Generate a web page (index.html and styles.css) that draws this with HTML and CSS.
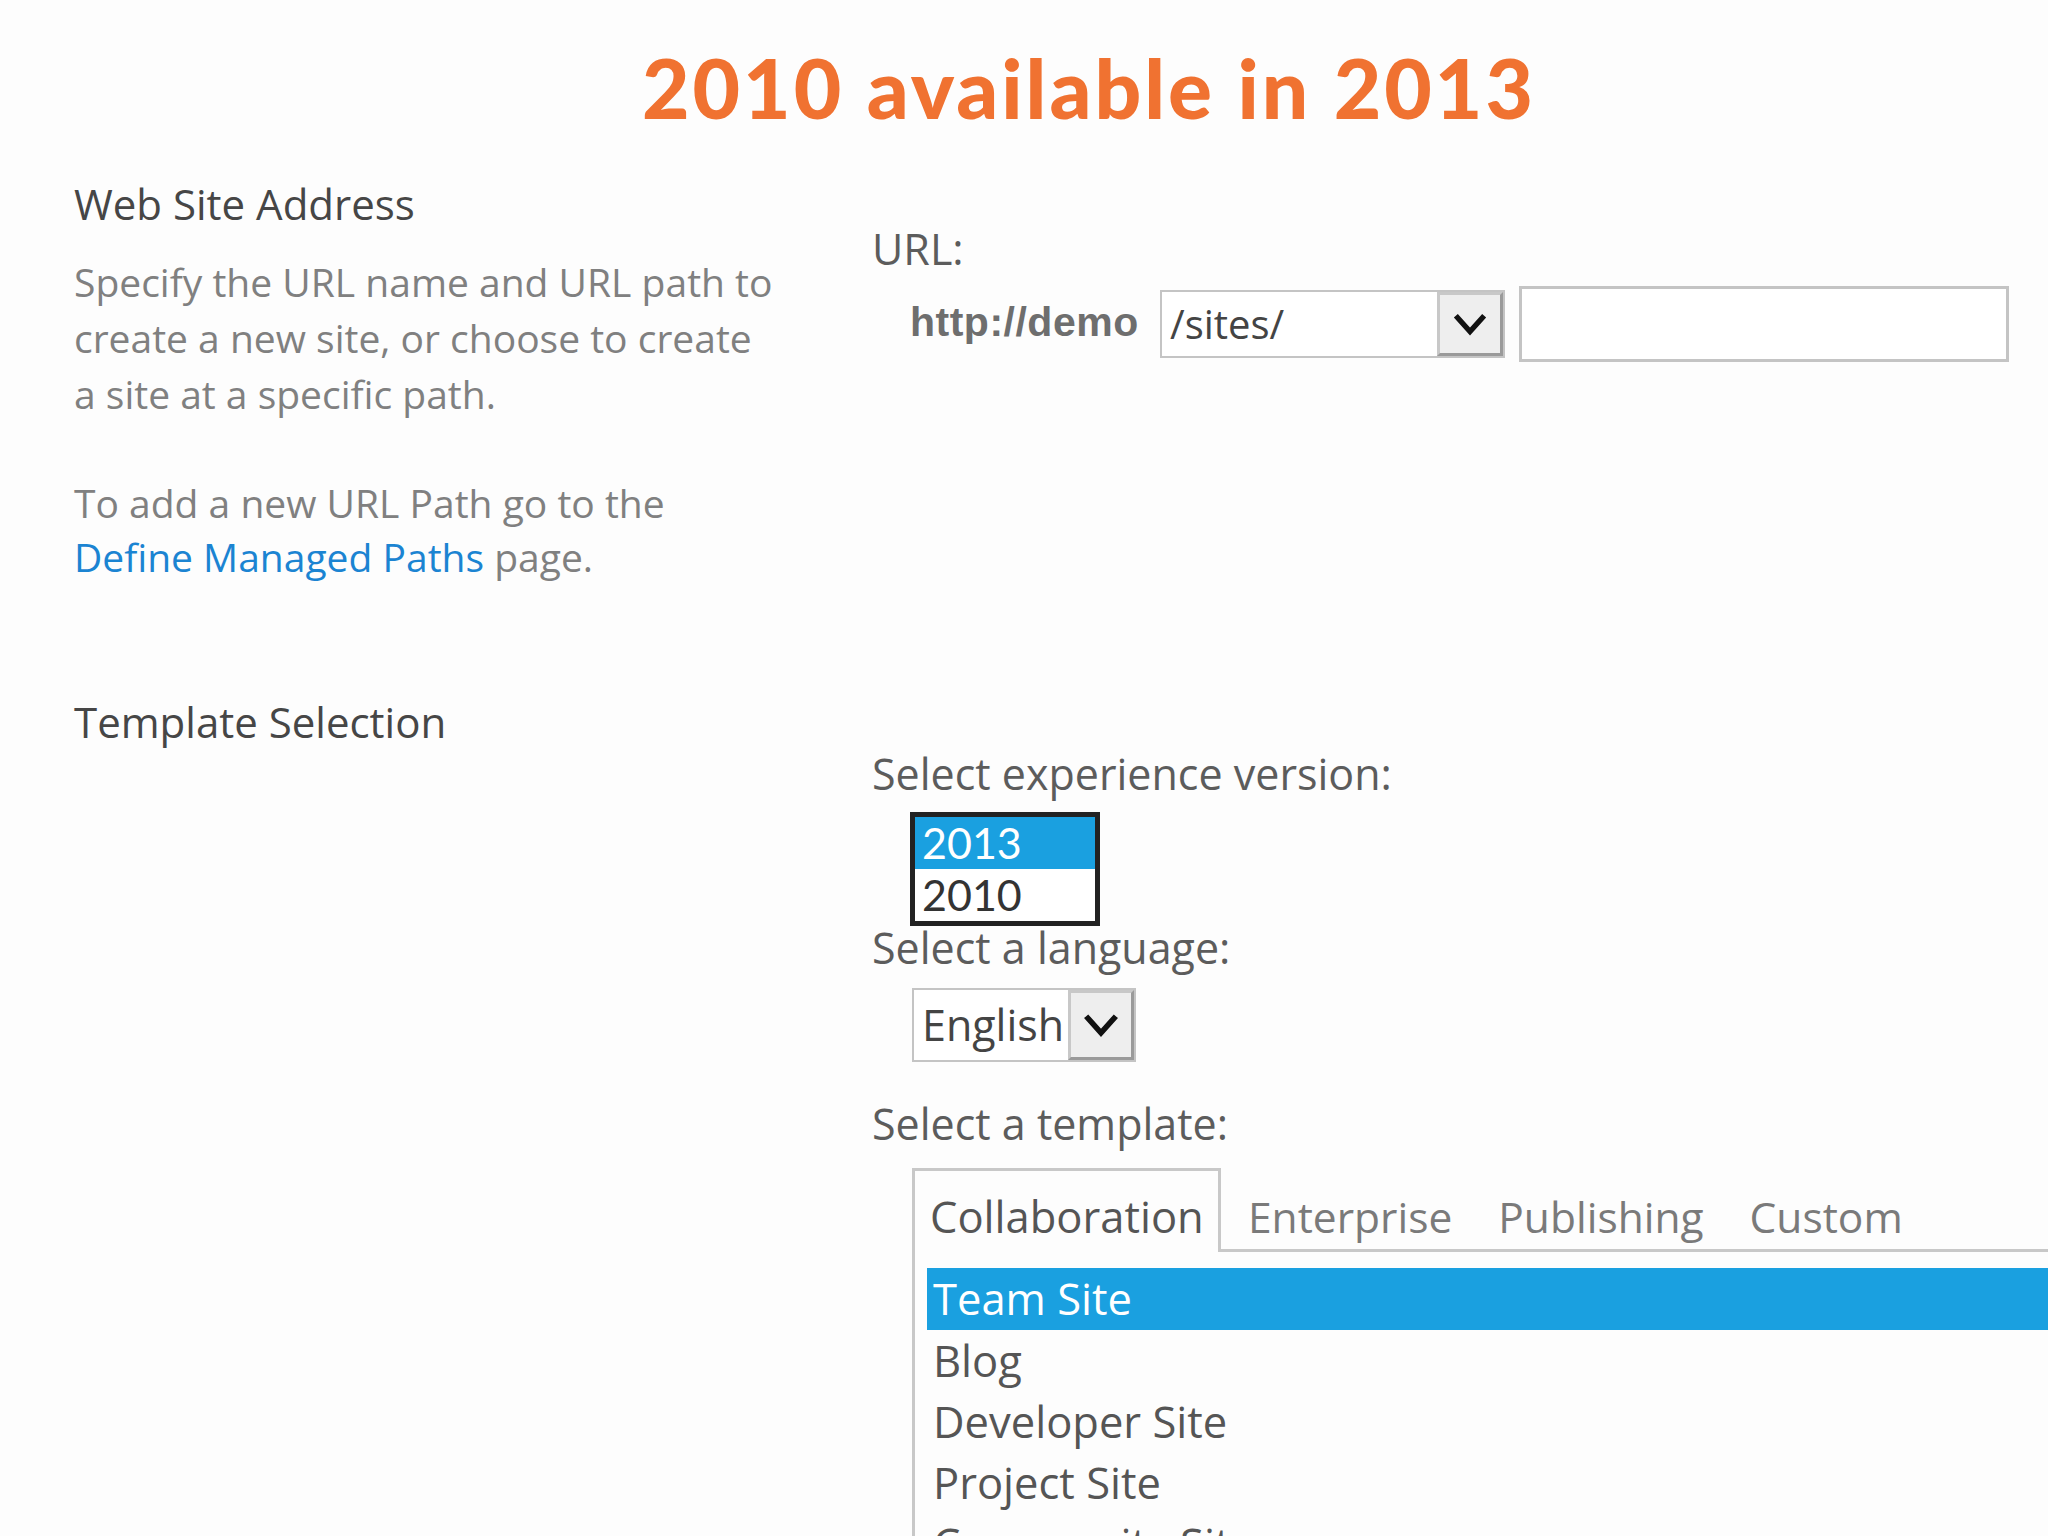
FILE: index.html
```html
<!doctype html>
<html lang="en">
  <head>
    <meta charset="UTF-8" />
    <meta name="viewport" content="width=device-width, initial-scale=1.0" />
    <title>2010 available in 2013</title>
    <link rel="stylesheet" href="styles.css">
  </head>
  <body>
    <h1 class="slide-title">2010 available in 2013</h1>

    <!-- Web site address section -->
    <div class="section">
      <div class="section-info">
        <h2>Web Site Address</h2>
        <p class="desc">
          Specify the URL name and URL path to<br />
          create a new site, or choose to create<br />
          a site at a specific path.
        </p>
        <p class="desc second">
          To add a new URL Path go to the<br />
          <a href="#">Define Managed Paths</a> page.
        </p>
      </div>
      <div class="section-fields url-fields">
        <div class="field-label">URL:</div>
        <div class="url-row">
          <span class="url-prefix">http://demo</span>
          <div class="dropdown path-select">
            <span class="dropdown-value">/sites/</span>
            <span class="dropdown-button">
              <svg viewBox="0 0 24 24" width="40" height="40">
                <path d="M3.5 7 L12 16.5 L20.5 7" fill="none" stroke="#111" stroke-width="3.2" />
              </svg>
            </span>
          </div>
          <div class="text-input"></div>
        </div>
      </div>
    </div>

    <!-- Template selection section -->
    <div class="section template-section">
      <div class="section-info">
        <h2>Template Selection</h2>
      </div>
      <div class="section-fields template-fields">
        <div class="field-label">Select experience version:</div>
        <div class="listbox">
          <div class="listbox-item selected">2013</div>
          <div class="listbox-item">2010</div>
        </div>

        <div class="field-label">Select a language:</div>
        <div class="dropdown lang-select">
          <span class="dropdown-value">English</span>
          <span class="dropdown-button">
            <svg viewBox="0 0 24 24" width="42" height="42">
              <path d="M3.5 7 L12 16.5 L20.5 7" fill="none" stroke="#111" stroke-width="3.2" />
            </svg>
          </span>
        </div>

        <div class="field-label template-label">Select a template:</div>
        <div class="tabs">
          <div class="tab active">Collaboration</div>
          <div class="tab">Enterprise</div>
          <div class="tab">Publishing</div>
          <div class="tab">Custom</div>
          <div class="tab-rest"></div>
        </div>
        <div class="template-list">
          <div class="template-item selected">Team Site</div>
          <div class="template-item">Blog</div>
          <div class="template-item">Developer Site</div>
          <div class="template-item">Project Site</div>
          <div class="template-item">Community Site</div>
        </div>
      </div>
    </div>
  </body>
</html>
```

FILE: styles.css
```css
* {
  margin: 0;
  padding: 0;
  box-sizing: border-box;
}

body {
  font-family: "Open Sans", "Noto Sans", sans-serif;
  background: #fdfdfd;
  color: #555;
  width: 2048px;
  height: 1536px;
  overflow: hidden;
}

/* Slide heading */
.slide-title {
  font-family: "Lato", "Liberation Sans", sans-serif;
  font-weight: 900;
  font-size: 82px;
  line-height: 100px;
  letter-spacing: 3px;
  color: #f07231;
  text-align: center;
  padding-top: 37px;
  padding-left: 130px;
}

.section {
  display: grid;
  grid-template-columns: 798px 1fr;
  padding-left: 74px;
  margin-top: 43px;
}

.section-info h2 {
  font-weight: 400;
  font-size: 42px;
  line-height: 48px;
  color: #464646;
}

.desc {
  font-size: 39px;
  line-height: 56px;
  color: #808080;
  margin-top: 26px;
}

.desc.second {
  margin-top: 54px;
  line-height: 54px;
}

.desc a {
  color: #1b84d2;
  text-decoration: none;
}

.field-label {
  font-size: 43px;
  line-height: 48px;
  color: #5c5c5c;
}

.url-fields {
  padding-top: 45px;
}

.url-row {
  display: flex;
  align-items: center;
  margin-top: 13px;
  padding-left: 38px;
}

.url-prefix {
  font-family: "Liberation Sans", "Arial", sans-serif;
  font-weight: 700;
  font-size: 41px;
  letter-spacing: 0.5px;
  color: #6e6e6e;
  width: 250px;
  padding-bottom: 4px;
}

.dropdown {
  display: flex;
  align-items: stretch;
  border: 2px solid #c4c4c4;
  background: #fff;
}

.dropdown-value {
  flex: 1;
  font-size: 40px;
  line-height: 64px;
  padding-left: 8px;
  color: #444;
}

.dropdown-button {
  display: flex;
  align-items: center;
  justify-content: center;
  width: 66px;
  background: #eeeeee;
  border: 3px solid #9a9a9a;
  border-top-color: #c8c8c8;
  border-left-color: #c8c8c8;
}

.path-select {
  width: 345px;
  height: 68px;
}

.text-input {
  width: 490px;
  height: 76px;
  margin-left: 14px;
  border: 3px solid #c4c4c4;
  background: #fff;
}

/* Template selection */
.template-section {
  margin-top: 114px;
}

.template-fields {
  padding-top: 54px;
}

.template-fields .field-label {
  line-height: 44px;
}

.listbox {
  width: 190px;
  margin: 16px 0 0 38px;
  border: 5px solid #222;
  background: #fff;
}

.listbox-item {
  font-family: "Lato", "Open Sans", sans-serif;
  font-size: 43px;
  line-height: 52px;
  padding-left: 7px;
  color: #333;
}

.listbox-item.selected {
  background: #1aa0e0;
  color: #fff;
}

.lang-select {
  width: 224px;
  height: 74px;
  margin: 18px 0 0 40px;
}

.lang-select .dropdown-value {
  line-height: 70px;
  font-size: 43px;
}

.template-label {
  margin-top: 40px;
}

.tabs {
  display: flex;
  margin: 22px 0 0 40px;
  height: 84px;
}

.tab {
  font-size: 42.5px;
  line-height: 54px;
  padding: 22px 23px 0 23px;
  color: #7a7a7a;
  border-bottom: 3px solid #c8c8c8;
}

.tab.active {
  font-size: 43.5px;
  color: #555;
  border: 3px solid #c8c8c8;
  border-bottom: none;
  padding: 19px 0 0 15px;
  width: 309px;
}

.tab.active + .tab {
  padding-left: 27px;
}

.tab-rest {
  flex: 1;
  border-bottom: 3px solid #c8c8c8;
}

.template-list {
  margin-left: 40px;
  border-left: 3px solid #c8c8c8;
  padding: 16px 0 0 12px;
}

.template-item {
  font-size: 43.5px;
  line-height: 61px;
  padding-left: 6px;
  color: #555;
}

.template-item.selected {
  background: #1aa0e0;
  color: #fff;
  line-height: 62px;
}
```
